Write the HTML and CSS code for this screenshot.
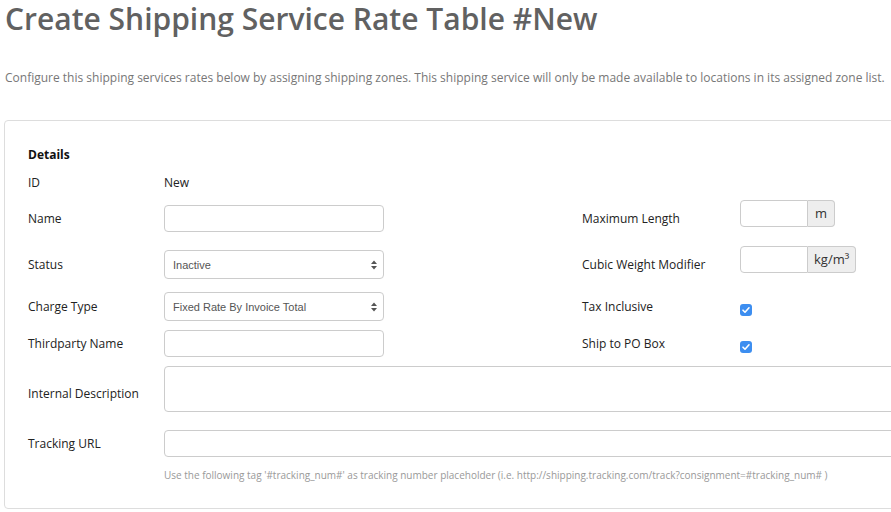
FILE: index.html
```
<!DOCTYPE html>
<html>
<head>
<meta charset="utf-8">
<link rel="stylesheet" href="styles.css">
</head>
<body>
<div class="page">
  <h1 class="title">Create Shipping Service Rate Table #New</h1>
  <p class="intro">Configure this shipping services rates below by assigning shipping zones. This shipping service will only be made available to locations in its assigned zone list.</p>
  <div class="panel">
    <div class="heading">Details</div>
    <div class="id-row">
      <span class="lbl">ID</span>
      <span class="val">New</span>
    </div>
    <div class="form">
      <div class="row r1">
        <label class="lbl m10">Name</label>
        <div class="m5"><input class="ctl" type="text"></div>
        <label class="lbl m10">Maximum Length</label>
        <div class="group"><input type="text" class="gin"><span class="addon">m</span></div>
      </div>
      <div class="row r2">
        <label class="lbl m10">Status</label>
        <div class="m4"><div class="sel"><span>Inactive</span><svg class="arr" width="6" height="10" viewBox="0 0 6 10"><path d="M0 4 L3 0.5 L6 4 Z M0 6 L3 9.5 L6 6 Z" fill="#555"/></svg></div></div>
        <label class="lbl m10">Cubic Weight Modifier</label>
        <div class="group"><input type="text" class="gin"><span class="addon">kg/m³</span></div>
      </div>
      <div class="row r3">
        <label class="lbl m6">Charge Type</label>
        <div><div class="sel"><span>Fixed Rate By Invoice Total</span><svg class="arr" width="6" height="10" viewBox="0 0 6 10"><path d="M0 4 L3 0.5 L6 4 Z M0 6 L3 9.5 L6 6 Z" fill="#555"/></svg></div></div>
        <label class="lbl m6">Tax Inclusive</label>
        <div class="m12"><span class="chk"><svg width="12" height="12" viewBox="0 0 12 12"><path d="M3 6.2 L5 8.2 L9 3.8" fill="none" stroke="#fff" stroke-width="1.6" stroke-linecap="round" stroke-linejoin="round"/></svg></span></div>
      </div>
      <div class="row r4">
        <label class="lbl m5">Thirdparty Name</label>
        <div><input class="ctl" type="text"></div>
        <label class="lbl m5">Ship to PO Box</label>
        <div class="m11"><span class="chk"><svg width="12" height="12" viewBox="0 0 12 12"><path d="M3 6.2 L5 8.2 L9 3.8" fill="none" stroke="#fff" stroke-width="1.6" stroke-linecap="round" stroke-linejoin="round"/></svg></span></div>
      </div>
      <div class="row r5">
        <label class="lbl m19">Internal Description</label>
        <textarea class="area"></textarea>
      </div>
      <div class="row r6">
        <label class="lbl m5">Tracking URL</label>
        <input class="wide" type="text">
      </div>
      <div class="help">Use the following tag '#tracking_num#' as tracking number placeholder (i.e. http://shipping.tracking.com/track?consignment=#tracking_num# )</div>
    </div>
  </div>
</div>
</body>
</html>
```
FILE: styles.css
```
html, body {
  margin: 0;
  padding: 0;
  background: #fff;
  overflow: hidden;
}
body {
  font-family: "Open Sans", "Liberation Sans", sans-serif;
  color: #222;
}
.page {
  padding: 0 0 0 4px;
  width: 1100px;
}
.title {
  margin: 0 0 0 1px;
  padding-top: 0;
  font-size: 30px;
  font-weight: 600;
  line-height: 38px;
  color: #616161;
  white-space: nowrap;
}
.intro {
  margin: 32px 0 0 1px;
  font-size: 12px;
  line-height: 16px;
  color: #777;
}
.panel {
  margin-top: 34px;
  border: 1px solid #ddd;
  border-radius: 4px;
  height: 389px;
  padding: 0 0 0 23px;
  box-sizing: border-box;
}
.heading {
  margin-top: 26px;
  font-size: 12px;
  font-weight: 700;
  line-height: 16px;
  color: #111;
}
.id-row {
  margin-top: 12px;
  display: flex;
  line-height: 16px;
}
.id-row .lbl { width: 136px; }
.val { font-size: 12px; color: #222; }
.lbl {
  font-size: 12px;
  line-height: 16px;
  color: #222;
  display: block;
}
.row .lbl { padding-top: 1px; }
.form {
  margin-top: 9px;
}
.row {
  display: grid;
  grid-template-columns: 136px 418px 158px 1fr;
  align-items: start;
}
.r1 { height: 46px; }
.r2 { height: 46px; }
.r3 { height: 38px; }
.r4 { height: 36px; }
.r5 { height: 64px; grid-template-columns: 136px 1fr; }
.r6 { height: 38px; grid-template-columns: 136px 1fr; }
.m4 { margin-top: 4px; }
.m5 { margin-top: 5px; }
.m6 { margin-top: 6px; }
.m10 { margin-top: 10px; }
.m11 { margin-top: 11px; }
.m12 { margin-top: 12px; }
.m19 { margin-top: 19px; }
.ctl, .wide, .area, .gin {
  box-sizing: border-box;
  border: 1px solid #ccc;
  border-radius: 4px;
  background: #fff;
  margin: 0;
  padding: 0 8px;
  font-family: inherit;
  outline: none;
  display: block;
}
.ctl { width: 220px; height: 27px; }
.wide { width: 900px; height: 27px; }
.area { width: 900px; height: 46px; resize: none; }
.sel {
  box-sizing: border-box;
  width: 220px;
  height: 29px;
  border: 1px solid #ccc;
  border-radius: 4px;
  display: flex;
  align-items: center;
  justify-content: space-between;
  padding: 0 6px 0 8px;
  font-family: "Liberation Sans", Arial, sans-serif;
  font-size: 11px;
  color: #555;
}
.arr { display: block; }
.group {
  display: flex;
  height: 27px;
}
.gin {
  width: 68px;
  height: 27px;
  border-radius: 4px 0 0 4px;
}
.addon {
  box-sizing: border-box;
  height: 27px;
  border: 1px solid #ccc;
  border-left: none;
  border-radius: 0 4px 4px 0;
  background: #eee;
  font-size: 13px;
  line-height: 25px;
  color: #333;
  padding: 0 6px;
  display: block;
}
.r1 .addon { width: 27px; text-align: center; padding: 0; }
.chk {
  display: block;
  width: 12px;
  height: 12px;
  border-radius: 3px;
  background: #3d8ef0;
}
.chk svg { display: block; }
.help {
  margin-left: 136px;
  margin-top: 0;
  font-size: 10px;
  line-height: 14px;
  color: #999;
}
```
